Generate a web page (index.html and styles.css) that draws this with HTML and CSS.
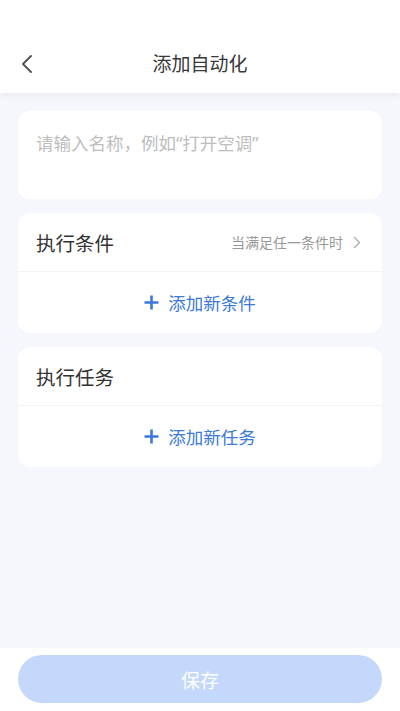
FILE: index.html
```html
<!DOCTYPE html>
<html lang="zh">
<head>
  <meta charset="UTF-8">
  <meta name="viewport" content="width=device-width, initial-scale=1.0">
  <title>添加自动化</title>
  <link rel="stylesheet" href="styles.css">
</head>
<body>
  <header class="topbar">
    <div class="nav">
      <span class="back">
        <svg width="14" height="20" viewBox="0 0 14 20"><path d="M11 2 L3 10 L11 18" fill="none" stroke="#555" stroke-width="2" stroke-linecap="round" stroke-linejoin="round"/></svg>
      </span>
      <h1>添加自动化</h1>
    </div>
  </header>

  <main class="content">
    <section class="card name-card">
      <input class="name-input" type="text" placeholder="请输入名称，例如“打开空调”">
    </section>

    <section class="card">
      <div class="card-head">
        <span class="card-title">执行条件</span>
        <span class="card-extra">当满足任一条件时
          <svg width="8" height="13" viewBox="0 0 8 13"><path d="M1.5 1.5 L6.5 6.5 L1.5 11.5" fill="none" stroke="#aaa" stroke-width="1.3" stroke-linecap="round" stroke-linejoin="round"/></svg>
        </span>
      </div>
      <div class="add-row">
        <svg width="15" height="15" viewBox="0 0 15 15"><path d="M7.5 0.5 V14.5 M0.5 7.5 H14.5" stroke="#3b7ad8" stroke-width="2.6"/></svg>
        <span>添加新条件</span>
      </div>
    </section>

    <section class="card">
      <div class="card-head">
        <span class="card-title">执行任务</span>
      </div>
      <div class="add-row">
        <svg width="15" height="15" viewBox="0 0 15 15"><path d="M7.5 0.5 V14.5 M0.5 7.5 H14.5" stroke="#3b7ad8" stroke-width="2.6"/></svg>
        <span>添加新任务</span>
      </div>
    </section>
  </main>

  <footer class="bottom">
    <button class="save" disabled>保存</button>
  </footer>
</body>
</html>
```

FILE: styles.css
```css
* {
  box-sizing: border-box;
}

body {
  margin: 0;
  height: 711px;
  display: flex;
  flex-direction: column;
  background-color: #f5f7fc;
  font-family: "Noto Sans CJK SC", "Noto Sans", sans-serif;
  color: #333;
}

.topbar {
  background-color: #fff;
  height: 93px;
  padding-top: 40px;
  box-shadow: 0 2px 8px rgba(0, 0, 0, 0.06);
  position: relative;
  z-index: 1;
}

.nav {
  height: 48px;
  display: flex;
  align-items: center;
  justify-content: center;
  position: relative;
}

.back {
  position: absolute;
  left: 20px;
  top: 14px;
  display: flex;
}

.nav h1 {
  margin: 0;
  margin-top: -3px;
  font-size: 19px;
  font-weight: normal;
  color: #383838;
}

.content {
  flex: 1;
  padding: 18px 18px 0;
  display: flex;
  flex-direction: column;
  gap: 14px;
}

.card {
  background-color: #fff;
  border-radius: 12px;
}

.name-card {
  height: 88px;
  padding: 20px 18px;
}

.name-input {
  width: 100%;
  border: none;
  outline: none;
  padding: 0;
  font-family: "Noto Sans", "Noto Sans CJK SC", sans-serif;
  font-size: 17.5px;
  line-height: 24px;
  background: transparent;
}

.name-input::placeholder {
  color: #bdbdbd;
}

.card-head {
  height: 59px;
  padding: 0 18px;
  display: flex;
  align-items: center;
  justify-content: space-between;
  border-bottom: 1px solid #f2f3f6;
}

.card-title {
  font-size: 19.5px;
  color: #333;
}

.card-extra {
  font-size: 14px;
  color: #999;
  display: flex;
  align-items: center;
  gap: 10px;
  padding-right: 3px;
}

.add-row {
  height: 61px;
  display: flex;
  align-items: center;
  justify-content: center;
  gap: 9px;
  font-size: 17.5px;
  color: #3b7ad8;
}

.bottom {
  height: 63px;
  background-color: #fff;
  padding: 7px 18px 8px;
}

.save {
  width: 100%;
  height: 48px;
  border: none;
  border-radius: 24px;
  background-color: #c3d8fb;
  color: #fff;
  font-family: inherit;
  font-size: 19px;
}
```
